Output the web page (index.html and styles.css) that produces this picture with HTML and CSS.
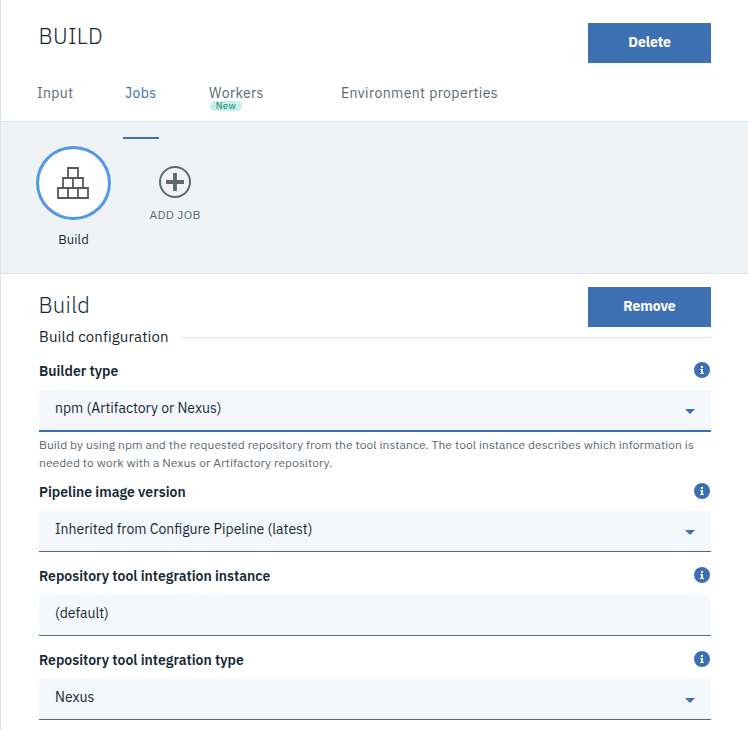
FILE: index.html
```html
<!DOCTYPE html>
<html lang="en">
<head>
<meta charset="utf-8">
<title>Build</title>
<link rel="stylesheet" href="styles.css">
</head>
<body>
<main class="panel">
  <header class="header">
    <div class="title-row">
      <h1 class="title stage-title">BUILD</h1>
      <button class="button">Delete</button>
    </div>
    <nav class="tabs">
      <a class="tab tab-input"><span>Input</span></a>
      <a class="tab tab-jobs active"><span>Jobs</span></a>
      <a class="tab tab-workers"><span>Workers</span><small class="badge">New</small></a>
      <a class="tab tab-env"><span>Environment properties</span></a>
    </nav>
  </header>
  <section class="jobs">
    <div class="job">
      <div class="job-circle">
        <svg class="bricks" width="32" height="32" viewBox="0 0 32 32"><path d="M11 1h10v10H11zM6 11h20v10H6zM16 11v10M1 21h30v10H1zM11 21v10M21 21v10"/></svg>
      </div>
      <span class="job-name">Build</span>
    </div>
    <div class="add-job">
      <svg width="32" height="32" viewBox="0 0 32 32"><circle cx="16" cy="16" r="15" fill="none" stroke="#5a6872" stroke-width="2"/><path d="M7 16h18M16 7v18" stroke="#5a6872" stroke-width="3.8"/></svg>
      <span class="add-text">ADD JOB</span>
    </div>
  </section>
  <section class="form">
    <div class="title-row">
      <h2 class="title job-title">Build</h2>
      <button class="button">Remove</button>
    </div>
    <div class="divider"><span class="config-text">Build configuration</span></div>
    <div class="field">
      <div class="label-row"><label>Builder type</label><svg class="info" viewBox="0 0 16 16"><circle cx="8" cy="8" r="8"/><path d="M7 4h2v2H7zM6 7h3v4h1v1H6v-1h1V8H6z"/></svg></div>
      <div class="input focused"><span>npm (Artifactory or Nexus)</span><svg class="caret" viewBox="0 0 10 5"><path d="M0 0h10L5 5z"/></svg></div>
      <p class="help">Build by using npm and the requested repository from the tool instance. The tool instance describes which information is<br>needed to work with a Nexus or Artifactory repository.</p>
    </div>
    <div class="field after-help">
      <div class="label-row"><label>Pipeline image version</label><svg class="info" viewBox="0 0 16 16"><circle cx="8" cy="8" r="8"/><path d="M7 4h2v2H7zM6 7h3v4h1v1H6v-1h1V8H6z"/></svg></div>
      <div class="input"><span>Inherited from Configure Pipeline (latest)</span><svg class="caret" viewBox="0 0 10 5"><path d="M0 0h10L5 5z"/></svg></div>
    </div>
    <div class="field">
      <div class="label-row"><label>Repository tool integration instance</label><svg class="info" viewBox="0 0 16 16"><circle cx="8" cy="8" r="8"/><path d="M7 4h2v2H7zM6 7h3v4h1v1H6v-1h1V8H6z"/></svg></div>
      <div class="input"><span>(default)</span></div>
    </div>
    <div class="field">
      <div class="label-row"><label>Repository tool integration type</label><svg class="info" viewBox="0 0 16 16"><circle cx="8" cy="8" r="8"/><path d="M7 4h2v2H7zM6 7h3v4h1v1H6v-1h1V8H6z"/></svg></div>
      <div class="input"><span>Nexus</span><svg class="caret" viewBox="0 0 10 5"><path d="M0 0h10L5 5z"/></svg></div>
    </div>
  </section>
</main>
</body>
</html>
```
FILE: styles.css
```css
* { box-sizing: border-box; }
body { margin: 0; background: #fff; color: #152935; font-family: "IBM Plex Sans", Roboto, "Liberation Sans", sans-serif; font-size: 14px; }
.panel { height: 730px; overflow: hidden; border-left: 1px solid #dfe3e6; }
.header { height: 122px; padding: 23px 37px 0 38px; border-bottom: 1px solid #dfe3e6; }
.title-row { display: flex; justify-content: space-between; align-items: flex-start; height: 40px; }
.title { margin: 0 0 0 -0.5px; font-size: 22px; font-weight: 300; line-height: 25px; letter-spacing: 0.35px; }
.job-title { line-height: 35px; letter-spacing: 0.3px; }
.button { width: 123px; height: 40px; padding: 0 0 2px; border: 0; background: #3d70b2; color: #fff; font: 700 14px/38px "IBM Plex Sans", Roboto, "Liberation Sans", sans-serif; letter-spacing: -0.05px; }
.tabs { display: flex; margin: 21px 0 0 -2px; color: #5a6872; line-height: 18px; letter-spacing: 0.4px; white-space: nowrap; }
.tab { position: relative; display: flex; flex-direction: column; align-items: flex-start; }
.tab-input { width: 88px; }
.tab-jobs { width: 84px; }
.tab-workers { width: 132px; }
.active { color: #3d70b2; }
.active::after { content: ""; position: absolute; top: 53px; left: -2px; width: 36px; height: 2px; background: #3d70b2; }
.badge { width: 32px; height: 10px; margin: -1px 0 0 1px; border-radius: 5px; background: #c8f0e8; color: #00806c; font-size: 9.5px; line-height: 10px; letter-spacing: 0.5px; text-align: center; }
.jobs { display: flex; height: 152px; padding: 24px 0 0 35px; background: #eff3f6; border-bottom: 1px solid #dfe3e6; }
.job { display: flex; flex-direction: column; align-items: center; width: 75px; }
.job-circle { display: flex; align-items: center; justify-content: center; width: 75px; height: 74px; padding-right: 1px; border: 3px solid #5596e6; border-radius: 50%; background: #fff; }
.bricks { fill: none; stroke: #595859; stroke-width: 1.8; }
.job-name { margin-top: 11px; font-size: 13px; line-height: 18px; letter-spacing: 0.1px; }
.add-job { display: flex; flex-direction: column; align-items: center; width: 64px; margin: 20px 0 0 32px; }
.add-text { margin-top: 8px; color: #5a6872; font-size: 12px; line-height: 18px; letter-spacing: 0.3px; }
.form { padding: 13px 37px 0 38px; }
.divider { display: flex; align-items: center; height: 20px; font-size: 15px; white-space: nowrap; }
.divider::after { content: ""; flex: 1; height: 1px; background: #dfe3e6; }
.config-text { align-self: flex-start; width: 143px; line-height: 19px; letter-spacing: 0.13px; }
.field { margin-top: 14px; }
.after-help { margin-top: 10px; }
.label-row { display: flex; align-items: center; justify-content: space-between; height: 20px; padding-right: 1px; margin-bottom: 9px; font-weight: 600; line-height: 20px; }
.info { width: 16px; height: 16px; margin-top: -2px; fill: #3d70b2; }
.info path { fill: #fff; }
.input { display: flex; align-items: flex-start; justify-content: space-between; height: 41px; padding: 0 16px; border-bottom: 1px solid #5a6872; background: #f4f7fb; line-height: 37px; }
.input.focused { height: 42px; border-bottom: 2px solid #3d70b2; }
.caret { width: 10px; height: 5px; margin-top: 19px; fill: #3d70b2; }
.help { margin: 4px 0 0; color: #5a6872; font-size: 12px; line-height: 18px; letter-spacing: 0.067px; white-space: nowrap; }
```
